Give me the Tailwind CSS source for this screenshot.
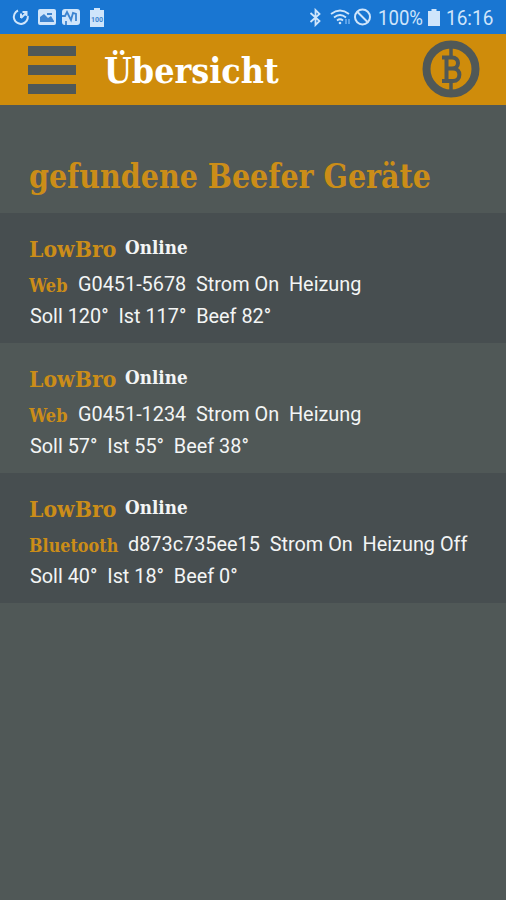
<!DOCTYPE html>
<html lang="de">
<head>
<meta charset="utf-8">
<title>Übersicht</title>
<script src="https://cdn.jsdelivr.net/npm/@tailwindcss/browser@4"></script>
</head>
<body class="w-[506px] h-[900px] overflow-hidden bg-[#505857] font-['Roboto',sans-serif]">
<div class="h-[34px] bg-[#1976d2] flex items-center justify-between pl-3 pr-3 text-[#cfe5fb]">
  <div class="flex items-center gap-2">
    <svg width="18" height="18" viewBox="0 0 18 18" fill="none" stroke="currentColor" stroke-width="2"><path d="M6 2.500A7 7 0 1 0 15.800 8M9 10V5.500M9 10l5-5M10.500 4h4v4"/></svg>
    <svg width="18" height="16" viewBox="0 0 18 16"><rect width="18" height="16" rx="2" fill="currentColor"/><path d="M2 13V8l4-3 4 4 3-2 3 5v1z" fill="#3d84d0"/><path d="M9 5h5" stroke="#3d84d0" stroke-width="2"/></svg>
    <svg class="-ml-0.5" width="18" height="16" viewBox="0 0 18 16"><rect width="18" height="16" rx="3" fill="currentColor"/><path d="M0 7h3l2-4 4 8 2-7 3 1v7M4 12v4" fill="none" stroke="#3d84d0" stroke-width="1.800"/></svg>
    <svg class="ml-0.5" width="14" height="19" viewBox="0 0 14 19"><path d="M4 0h6v2h4v17H0V2h4z" fill="currentColor"/><text x="7" y="13.500" text-anchor="middle" font-size="7" font-weight="700" fill="#3d84d0">100</text></svg>
  </div>
  <div class="flex items-center">
    <svg class="mr-2" width="13" height="19" viewBox="0 0 13 19" fill="none" stroke="currentColor" stroke-width="1.800"><path d="M1.500 5l9 8-4 4V2l4 4-9 8"/></svg>
    <svg width="23" height="18" viewBox="0 0 23 18" fill="none" stroke="currentColor" stroke-width="1.800"><path d="M1 6q9-7 18 0M4 9.500q6-5 12 0M7 12.500q3-2.500 6 0"/><circle cx="10" cy="15" r="1.300" fill="currentColor" stroke="none"/><path d="M16 11v5M19 11v5" stroke="#64a8ec"/></svg>
    <svg class="mr-1.5" width="19" height="18" viewBox="0 0 18 18" fill="none" stroke="currentColor" stroke-width="2"><circle cx="9" cy="9" r="7.500"/><path d="M3.500 3.500l11 11"/></svg>
    <span class="inline-block w-[50px] text-[20px] leading-[34px] pt-0.5"><span class="inline-block origin-left scale-x-[.93]">100%</span></span>
    <svg class="mr-1.5" width="12" height="17" viewBox="0 0 12 17"><path d="M3.500 0h5v2H12v15H0V2h3.500z" fill="currentColor"/></svg>
    <span class="inline-block w-[48px] text-[20px] leading-[34px] pt-0.5"><span class="inline-block origin-left scale-x-[.95]">16:16</span></span>
  </div>
</div>

<header class="h-[71px] bg-[#cf8c0b] flex items-start pl-[28px] pr-[26px]">
  <div class="mt-3 w-[48px] flex flex-col gap-[9px]">
    <div class="h-[10px] bg-[#505857]"></div><div class="h-[10px] bg-[#505857]"></div><div class="h-[10px] bg-[#505857]"></div>
  </div>
  <h1 class="ml-[28px] mt-[11px] w-[176px] text-[36px] leading-[50px] font-bold text-white font-['DejaVu_Serif_Condensed','DejaVu_Serif',serif] whitespace-nowrap"><span class="inline-block origin-left scale-x-[.985]">Übersicht</span></h1>
  <svg class="ml-auto mt-[6px]" width="58" height="58" viewBox="0 0 58 58" fill="none" stroke="#505857"><circle cx="29" cy="29" r="24.500" stroke-width="8"/><path d="M29 8v9M29 41v9" stroke-width="3.500"/><path d="M20 17.500h10c8 0 8 11 0 11h-6M24 28.500h7c8.500 0 8.500 12.500 0 12.500H20M24.500 17v24" stroke-width="4"/></svg>
</header>

<h2 class="h-[108px] pl-[29px] pt-[46px] text-[33px] leading-[52px] font-bold text-[#cb8d18] font-['DejaVu_Serif_Condensed','DejaVu_Serif',serif] whitespace-nowrap"><span class="inline-block origin-left scale-x-[.961]">gefundene Beefer Geräte</span></h2>

<main class="text-[19.85px] text-[#f3f5f5]">
  <section class="h-[130px] bg-[#474e50] pl-[29px] pt-5">
    <div class="flex h-[35px] font-bold font-['DejaVu_Serif',serif]"><div class="w-[96px] text-[22px] leading-[32px] text-[#cb8d18]"><span class="inline-block origin-left scale-x-[.93]">LowBro</span></div><div class="text-[18px] leading-[30px]"><span class="inline-block origin-left scale-x-[.935]">Online</span></div></div>
    <div class="flex h-[33px]"><div class="w-[49px] text-[18px] leading-[35px] font-bold text-[#cb8d18] font-['DejaVu_Serif',serif]"><span class="inline-block origin-left scale-x-[.9]">Web</span></div><div class="leading-[33px] whitespace-pre">G0451-5678  Strom On  Heizung</div></div>
    <div class="leading-[32px] pl-px whitespace-pre">Soll 120°  Ist 117°  Beef 82°</div>
  </section>
  <section class="h-[130px] pl-[29px] pt-5">
    <div class="flex h-[35px] font-bold font-['DejaVu_Serif',serif]"><div class="w-[96px] text-[22px] leading-[32px] text-[#cb8d18]"><span class="inline-block origin-left scale-x-[.93]">LowBro</span></div><div class="text-[18px] leading-[30px]"><span class="inline-block origin-left scale-x-[.935]">Online</span></div></div>
    <div class="flex h-[33px]"><div class="w-[49px] text-[18px] leading-[35px] font-bold text-[#cb8d18] font-['DejaVu_Serif',serif]"><span class="inline-block origin-left scale-x-[.9]">Web</span></div><div class="leading-[33px] whitespace-pre">G0451-1234  Strom On  Heizung</div></div>
    <div class="leading-[32px] pl-px whitespace-pre">Soll 57°  Ist 55°  Beef 38°</div>
  </section>
  <section class="h-[130px] bg-[#474e50] pl-[29px] pt-5">
    <div class="flex h-[35px] font-bold font-['DejaVu_Serif',serif]"><div class="w-[96px] text-[22px] leading-[32px] text-[#cb8d18]"><span class="inline-block origin-left scale-x-[.93]">LowBro</span></div><div class="text-[18px] leading-[30px]"><span class="inline-block origin-left scale-x-[.935]">Online</span></div></div>
    <div class="flex h-[33px]"><div class="w-[99px] text-[18px] leading-[35px] font-bold text-[#cb8d18] font-['DejaVu_Serif',serif]"><span class="inline-block origin-left scale-x-[.89]">Bluetooth</span></div><div class="leading-[33px] whitespace-pre">d873c735ee15  Strom On  Heizung Off</div></div>
    <div class="leading-[32px] pl-px whitespace-pre">Soll 40°  Ist 18°  Beef 0°</div>
  </section>
</main>
</body>
</html>
